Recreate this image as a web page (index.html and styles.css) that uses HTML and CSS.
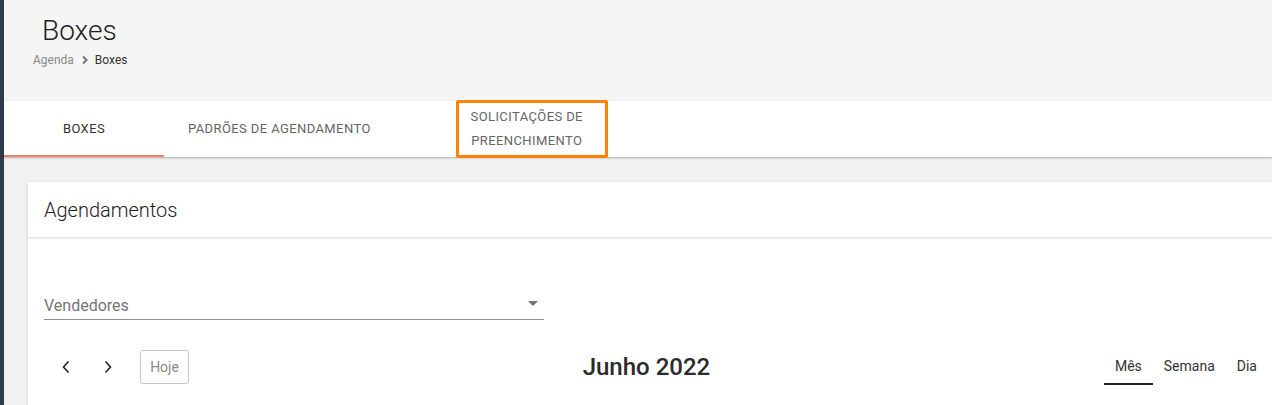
FILE: index.html
```html
<!DOCTYPE html>
<html lang="pt-BR">
<head>
    <meta charset="UTF-8">
    <meta name="viewport" content="width=device-width, initial-scale=1.0">
    <title>Boxes</title>
    <link rel="stylesheet" href="styles.css">
</head>
<body>

<div class="app">
    <div class="sidebar-edge"></div>

    <div class="main">
        <header class="page-header">
            <h1 class="page-title">Boxes</h1>
            <nav class="breadcrumb">
                <span class="breadcrumb-link">Agenda</span>
                <svg class="breadcrumb-sep" width="8" height="10" viewBox="0 0 8 10">
                    <path d="M2 1.5 L5.5 5 L2 8.5" fill="none" stroke="#757575" stroke-width="2"/>
                </svg>
                <span class="breadcrumb-current">Boxes</span>
            </nav>
        </header>

        <div class="tabs">
            <div class="tab active">Boxes</div>
            <div class="tab">Padrões de agendamento</div>
            <div class="tab">
                Solicitações de preenchimento
                <span class="highlight"></span>
            </div>
        </div>

        <div class="content">
            <section class="card">
                <div class="card-header">Agendamentos</div>
                <div class="card-body">
                    <div class="select-field">
                        <span class="select-label">Vendedores</span>
                        <span class="select-arrow"></span>
                    </div>

                    <div class="calendar-toolbar">
                        <div class="toolbar-left">
                            <button class="nav-btn" aria-label="Anterior">
                                <svg width="10" height="14" viewBox="0 0 10 14">
                                    <path d="M7.5 1.5 L2.5 7 L7.5 12.5" fill="none" stroke="#222" stroke-width="1.6"/>
                                </svg>
                            </button>
                            <button class="nav-btn" aria-label="Próximo">
                                <svg width="10" height="14" viewBox="0 0 10 14">
                                    <path d="M2.5 1.5 L7.5 7 L2.5 12.5" fill="none" stroke="#222" stroke-width="1.6"/>
                                </svg>
                            </button>
                            <button class="today-btn">Hoje</button>
                        </div>
                        <h2 class="calendar-title">Junho 2022</h2>
                        <div class="view-switch">
                            <button class="view-btn active">Mês</button>
                            <button class="view-btn">Semana</button>
                            <button class="view-btn">Dia</button>
                        </div>
                    </div>
                </div>
            </section>
        </div>
    </div>
</div>

</body>
</html>
```

FILE: styles.css
```css
html, body {
    margin: 0;
    padding: 0;
}

body {
    font-family: Roboto, "Liberation Sans", Arial, sans-serif;
    background-color: #f1f1f1;
    color: #333;
    overflow: hidden;
    height: 405px;
}

.app {
    display: flex;
    height: 405px;
}

.sidebar-edge {
    width: 4px;
    flex-shrink: 0;
    background-color: #2f3a4c;
}

.main {
    flex: 1;
    min-width: 0;
}

/* Page header */
.page-header {
    background-color: #f5f5f5;
    height: 101px;
    box-sizing: border-box;
    padding: 14px 0 0 29px;
}

.page-title {
    margin: 0 0 0 9px;
    font-size: 28px;
    font-weight: 300;
    line-height: 34px;
    color: #222;
}

.breadcrumb {
    display: flex;
    align-items: center;
    margin-top: 4px;
    font-size: 12px;
    line-height: 16px;
}

.breadcrumb-link {
    color: #8a8a8a;
}

.breadcrumb-sep {
    margin: 0 6px 0 7px;
}

.breadcrumb-current {
    color: #333;
}

/* Tabs */
.tabs {
    display: flex;
    background-color: #fff;
    height: 56px;
    box-shadow: 0 1px 2px rgba(0, 0, 0, 0.28);
    position: relative;
}

.tab {
    position: relative;
    min-width: 160px;
    max-width: 264px;
    padding: 0 24px;
    box-sizing: border-box;
    display: flex;
    align-items: center;
    justify-content: center;
    text-align: center;
    font-size: 13px;
    font-weight: 400;
    letter-spacing: 0.4px;
    line-height: 24px;
    text-transform: uppercase;
    color: #666;
}

.tab:last-child {
    width: 264px;
    padding: 0 48px;
}

.tab.active {
    color: #333;
}

.tab.active::after {
    content: "";
    position: absolute;
    left: 0;
    right: 0;
    bottom: 0;
    height: 2px;
    background-color: #f4825f;
}

.highlight {
    position: absolute;
    left: 61px;
    top: -1px;
    width: 152px;
    height: 58px;
    box-sizing: border-box;
    border: 3px solid #ff8300;
    border-radius: 2px;
}

/* Content */
.content {
    padding: 25px 0 0 24px;
}

.card {
    width: 1256px;
    height: 223px;
    background-color: #fff;
    box-shadow: 0 1px 3px rgba(0, 0, 0, 0.14);
}

.card-header {
    height: 56px;
    box-sizing: border-box;
    padding: 0 16px;
    display: flex;
    align-items: center;
    font-size: 20px;
    font-weight: 300;
    color: #222;
    border-bottom: 1px solid #e2e2e2;
    box-shadow: 0 1px 2px rgba(0, 0, 0, 0.06);
}

.card-body {
    padding: 51px 16px 0 16px;
}

.select-field {
    position: relative;
    width: 500px;
    height: 31px;
    box-sizing: border-box;
    border-bottom: 1px solid #8f8f8f;
    display: flex;
    align-items: center;
    padding-top: 2px;
}

.select-label {
    font-size: 16px;
    color: #767676;
}

.select-arrow {
    position: absolute;
    right: 6px;
    top: 12px;
    width: 0;
    height: 0;
    border-left: 5px solid transparent;
    border-right: 5px solid transparent;
    border-top: 5px solid #757575;
}

/* Calendar toolbar */
.calendar-toolbar {
    display: flex;
    align-items: center;
    justify-content: space-between;
    margin-top: 29px;
    height: 36px;
}

.toolbar-left {
    display: flex;
    align-items: center;
}

button {
    font-family: inherit;
    background: none;
    border: none;
    padding: 0;
    cursor: pointer;
}

.nav-btn {
    width: 40px;
    height: 34px;
    display: flex;
    align-items: center;
    justify-content: center;
}

.nav-btn:first-child {
    width: 44px;
}

.today-btn {
    margin-left: 12px;
    width: 49px;
    height: 34px;
    border: 1px solid #c8c8c8;
    border-radius: 3px;
    font-size: 14px;
    color: #8a8a8a;
}

.calendar-title {
    margin: 0;
    font-size: 24px;
    font-weight: 500;
    color: #2b2b2b;
}

.view-switch {
    display: flex;
    align-items: stretch;
    height: 36px;
}

.view-btn {
    padding: 0 11px;
    font-size: 14px;
    color: #333;
    border-bottom: 2px solid transparent;
}

.view-btn.active {
    border-bottom-color: #222;
}
```
